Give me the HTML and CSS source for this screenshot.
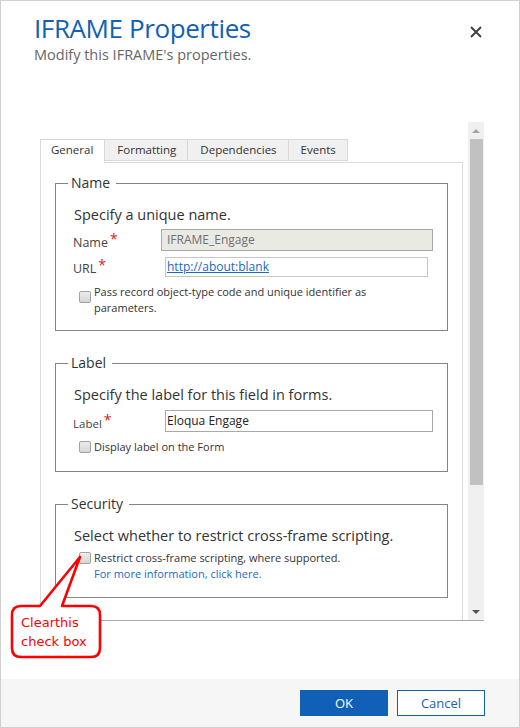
FILE: index.html
```html
<!DOCTYPE html>
<html lang="en">
  <head>
    <meta charset="UTF-8" />
    <title>IFRAME Properties</title>
    <link rel="stylesheet" href="styles.css">
  </head>
  <body>
    <div class="dialog">
      <div class="header">
        <div class="titles">
          <h1 class="title">IFRAME Properties</h1>
          <p class="subtitle">Modify this IFRAME's properties.</p>
        </div>
        <button class="close" title="Close">
          <svg width="12" height="12" viewBox="0 0 12 12"><path d="M1 1L11 11M11 1L1 11" stroke="#3c3c3c" stroke-width="1.8" /></svg>
        </button>
      </div>

      <div class="frame">
        <div class="frame-body">
          <ul class="tabs">
            <li class="tab active">General</li>
            <li class="tab">Formatting</li>
            <li class="tab">Dependencies</li>
            <li class="tab">Events</li>
          </ul>
          <div class="panel">
            <!-- Name -->
            <fieldset class="group group-name">
              <legend>Name</legend>
              <p class="hint">Specify a unique name.</p>
              <div class="row row-name">
                <span class="field-label">Name<span class="req">*</span></span>
                <div class="input input-name">IFRAME_Engage</div>
              </div>
              <div class="row row-url">
                <span class="field-label">URL<span class="req">*</span></span>
                <div class="input input-url"><a href="#">http://about:blank</a></div>
              </div>
              <div class="check-row check-wrap">
                <span class="chk"></span>
                <span class="check-text">Pass record object-type code and unique identifier as parameters.</span>
              </div>
            </fieldset>

            <!-- Label -->
            <fieldset class="group group-label">
              <legend>Label</legend>
              <p class="hint">Specify the label for this field in forms.</p>
              <div class="row row-label">
                <span class="field-label small">Label<span class="req">*</span></span>
                <div class="input input-label">Eloqua Engage</div>
              </div>
              <div class="check-row">
                <span class="chk"></span>
                <span class="check-text">Display label on the Form</span>
              </div>
            </fieldset>

            <!-- Security -->
            <fieldset class="group group-security">
              <legend>Security</legend>
              <p class="hint">Select whether to restrict cross-frame scripting.</p>
              <div class="check-row check-security">
                <span class="chk"></span>
                <span class="check-text">Restrict cross-frame scripting, where supported.</span>
              </div>
              <a class="more" href="#">For more information, click here.</a>
            </fieldset>
          </div>
        </div>
        <div class="scrollbar">
          <div class="sb-btn"><span class="arrow-up"></span></div>
          <div class="sb-thumb"></div>
          <div class="sb-track"></div>
          <div class="sb-btn"><span class="arrow-down"></span></div>
        </div>
      </div>

      <div class="spacer"></div>

      <div class="footer">
        <button class="btn btn-ok">OK</button>
        <button class="btn btn-cancel">Cancel</button>
      </div>

      <!-- 标注气泡 -->
      <div class="callout">
        <svg width="96" height="108" viewBox="10 553 96 108">
          <path d="M21 606H40L80 557L62 606H91Q100 606 100 615V648Q100 657 91 657H21Q12 657 12 648V615Q12 606 21 606Z"
            fill="#fff" stroke="#ff0000" stroke-width="2.6" stroke-linejoin="round" />
        </svg>
        <div class="callout-text">Clearthis<br>check box</div>
      </div>
    </div>
  </body>
</html>
```

FILE: styles.css
```css
html,
body {
  margin: 0;
  padding: 0;
}
body {
  width: 520px;
  height: 728px;
  overflow: hidden;
  font-family: "Open Sans", "Noto Sans", sans-serif;
  color: #333;
  background: #fff;
}
.dialog {
  position: relative;
  width: 520px;
  height: 728px;
  box-sizing: border-box;
  border: 1px solid #d0d0d0;
  display: flex;
  flex-direction: column;
  background: #fff;
}
/* 头部 */
.header {
  height: 121px;
  flex-shrink: 0;
  box-sizing: border-box;
  padding: 12px 37px 0 33px;
  display: flex;
  justify-content: space-between;
  align-items: flex-start;
}
.title {
  margin: 0;
  font-size: 26px;
  line-height: 30px;
  font-weight: 400;
  letter-spacing: -0.4px;
  color: #1160b7;
}
.subtitle {
  margin: 2px 0 0;
  font-size: 14.5px;
  line-height: 20px;
  color: #666;
}
.close {
  display: block;
  margin-top: 13px;
  width: 12px;
  height: 12px;
  padding: 0;
  border: 0;
  background: none;
}
.close svg {
  display: block;
}
/* 内嵌区域 */
.frame {
  height: 499px;
  flex-shrink: 0;
  box-sizing: border-box;
  margin: 0 35px 0 39px;
  border-bottom: 1px solid #a9a9a9;
  display: flex;
}
.frame-body {
  flex: 1;
  overflow: hidden;
  padding-top: 17px;
}
.tabs {
  display: flex;
  align-items: flex-start;
  list-style: none;
  margin: 0;
  padding: 0;
  height: 23px;
}
.tab {
  height: 22px;
  box-sizing: border-box;
  padding: 0 11px 0 12px;
  border: 1px solid #d9d9d9;
  border-left: 0;
  background: #f0f0f0;
  font-size: 11.5px;
  line-height: 20px;
  color: #333;
}
.tab.active {
  position: relative;
  z-index: 1;
  height: 24px;
  padding: 0 11px 0 10px;
  background: #fff;
  border-left: 1px solid #d9d9d9;
  border-bottom: 0;
}
.panel {
  width: 423px;
  box-sizing: border-box;
  border: 1px solid #dcdcdc;
  border-bottom: 0;
  padding: 0 14px 40px 14px;
}
.group {
  margin: 22px 0 0;
  padding: 0 14px 14px 18px;
  min-width: 0;
  border: 1px solid #858585;
}
.group-name {
  margin-top: 10px;
}
.group-label {
  padding-bottom: 16px;
}
.group-security {
  padding-bottom: 15px;
}
.group legend {
  margin-left: -6px;
  padding: 0 6px 0 3px;
  font-size: 14px;
  line-height: 20px;
  color: #333;
}
.hint {
  margin: 12px 0 0;
  font-size: 14.5px;
  line-height: 20px;
  color: #333;
}
.row {
  display: flex;
  align-items: flex-end;
}
.row-name {
  margin-top: 4px;
}
.row-url {
  margin-top: 6px;
}
.row-label {
  margin-top: 5px;
}
.field-label {
  width: 87px;
  flex-shrink: 0;
  margin-left: -1px;
  font-size: 12.5px;
  line-height: 16px;
  color: #444;
}
.field-label.small {
  font-size: 11.5px;
}
.req {
  margin-left: 2px;
  color: #e02020;
  font-size: 14px;
  vertical-align: 3px;
  line-height: 0;
}
.input {
  box-sizing: border-box;
  height: 22px;
  border: 1px solid #a9a9a9;
  padding: 0 1px;
  font-size: 12px;
  line-height: 20px;
  color: #222;
  background: #fff;
  white-space: nowrap;
}
.input-name {
  width: 272px;
  margin-left: 1px;
  padding-left: 5px;
  background: #ebe9e4;
  color: #707070;
}
.input-url {
  width: 263px;
  height: 20px;
  line-height: 18px;
  margin-left: 5px;
  border-color: #c6c6c6;
}
.input-url a {
  color: #1a68c6;
}
.input-label {
  width: 268px;
  margin-left: 5px;
}
/* 复选框 */
.check-row {
  display: flex;
  align-items: flex-start;
  margin: 7px 0 0 5px;
}
.check-security {
  margin-top: 4px;
}
.chk {
  width: 12px;
  height: 12px;
  flex-shrink: 0;
  box-sizing: border-box;
  margin: 2px 3px 0 0;
  border: 1px solid #a2a2a2;
  border-radius: 2px;
  background: linear-gradient(#ececec, #d6d6d6);
}
.check-wrap .chk {
  margin-top: 7px;
}
.check-text {
  font-size: 11px;
  line-height: 16px;
  color: #333;
}
.check-wrap .check-text {
  max-width: 290px;
}
.more {
  display: block;
  margin-left: 20px;
  font-size: 11px;
  line-height: 16px;
  color: #1a6ac8;
  text-decoration: none;
}
/* 滚动条 */
.scrollbar {
  width: 16px;
  flex-shrink: 0;
  background: #f0f0f0;
  display: flex;
  flex-direction: column;
}
.sb-btn {
  height: 17px;
  display: flex;
  align-items: center;
  justify-content: center;
}
.arrow-up {
  width: 0;
  height: 0;
  border-left: 4px solid transparent;
  border-right: 4px solid transparent;
  border-bottom: 4px solid #a3a3a3;
}
.arrow-down {
  width: 0;
  height: 0;
  border-left: 4px solid transparent;
  border-right: 4px solid transparent;
  border-top: 4px solid #505050;
}
.sb-thumb {
  height: 346px;
  margin: 0 1px 0 2px;
  background: #c1c1c1;
}
.sb-track {
  flex: 1;
}
/* 底部按钮 */
.spacer {
  flex: 1;
}
.footer {
  height: 48px;
  flex-shrink: 0;
  box-sizing: border-box;
  padding: 11px 34px 0 0;
  background: #f6f6f6;
  display: flex;
  justify-content: flex-end;
  align-items: flex-start;
  gap: 9px;
}
.btn {
  width: 88px;
  height: 26px;
  box-sizing: border-box;
  border: 1px solid #1160b7;
  font-family: "Open Sans", "Noto Sans", sans-serif;
  font-size: 13px;
  padding: 0;
}
.btn-ok {
  background: #1160b7;
  color: #fff;
}
.btn-cancel {
  background: #fff;
  color: #1a5fae;
}
/* 标注 */
.callout {
  position: absolute;
  left: 9px;
  top: 552px;
  width: 96px;
  height: 108px;
}
.callout svg {
  display: block;
}
.callout-text {
  position: absolute;
  left: 11px;
  top: 60px;
  font-family: "DejaVu Sans", sans-serif;
  font-size: 13px;
  line-height: 19px;
  color: #ff0000;
}
```
